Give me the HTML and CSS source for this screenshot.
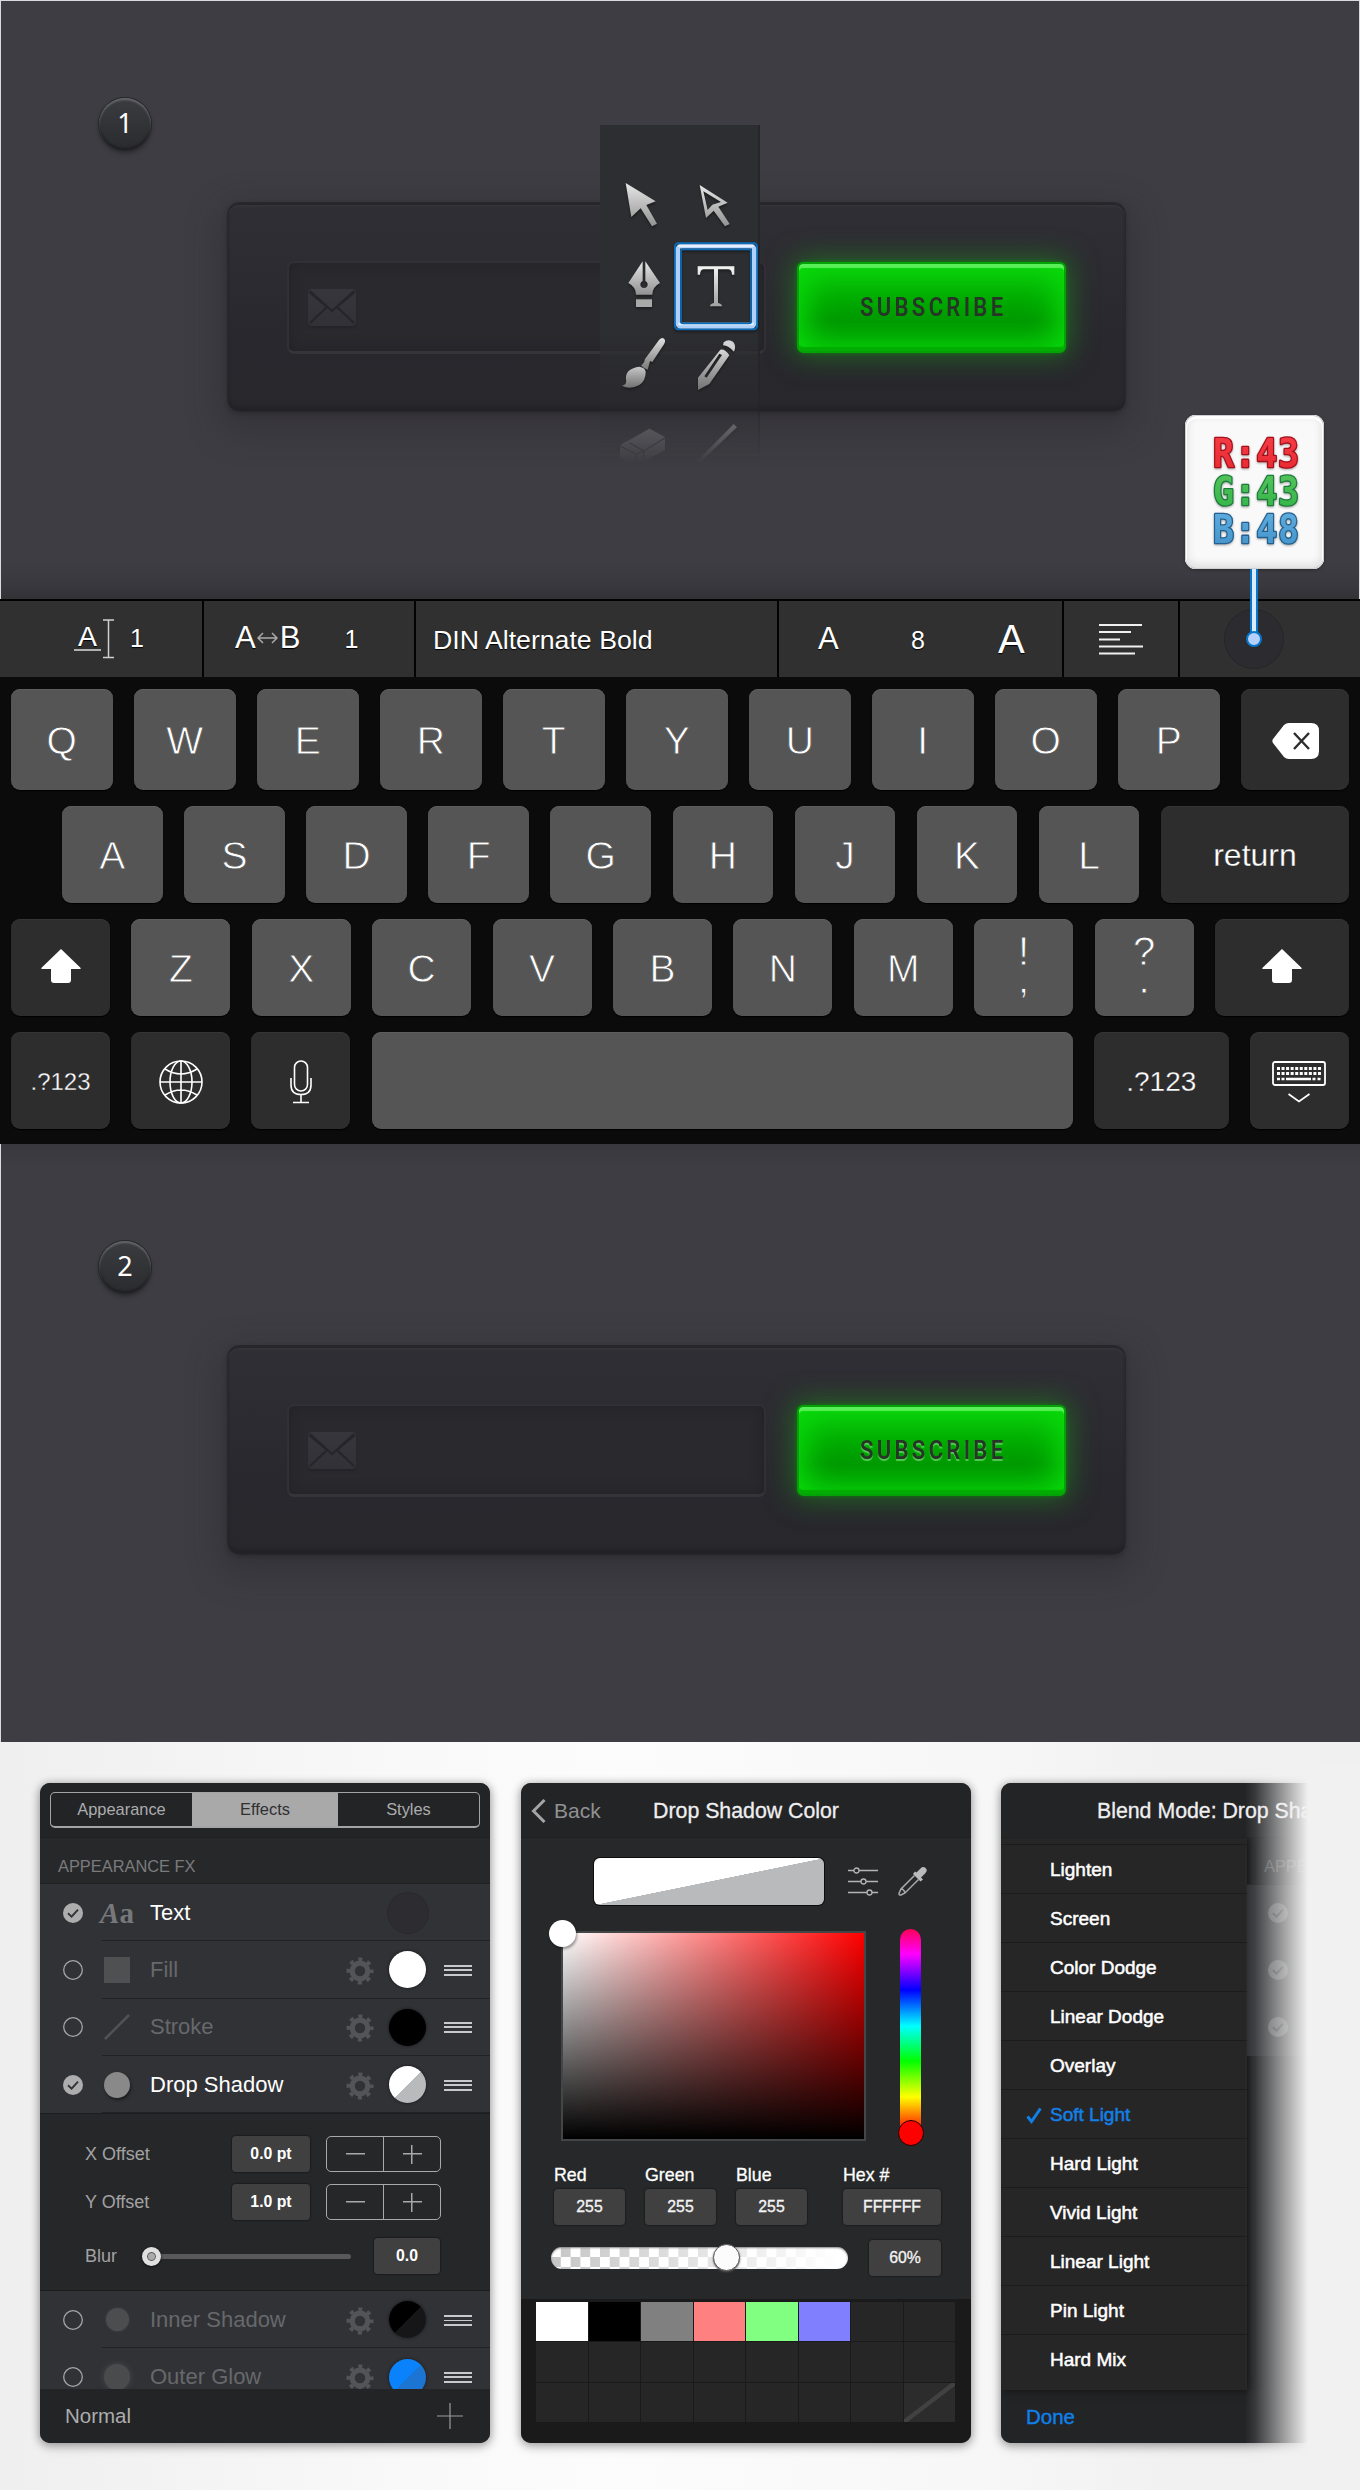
FILE: index.html
```html
<!DOCTYPE html>
<html lang="en">
<head>
<meta charset="utf-8">
<title>Subscribe form tutorial</title>
<link rel="stylesheet" href="styles.css">
</head>
<body>
<svg class="defs" width="0" height="0">
  <defs>
    <linearGradient id="metal" x1="0" y1="0" x2="0" y2="1"><stop offset="0" stop-color="#e6e6e6"/><stop offset="1" stop-color="#929292"/></linearGradient>
    <linearGradient id="lightMetal" x1="0" y1="0" x2="0" y2="1"><stop offset="0" stop-color="#f4f4f4"/><stop offset="1" stop-color="#a0a0a0"/></linearGradient>
    <linearGradient id="dimMetal" x1="0" y1="0" x2="0" y2="1"><stop offset="0" stop-color="#e0e0e0"/><stop offset="1" stop-color="#888"/></linearGradient>
    <linearGradient id="red" x1="0" y1="0" x2="0" y2="1"><stop offset="0" stop-color="#f5404a"/><stop offset="1" stop-color="#e8252e"/></linearGradient>
    <linearGradient id="green" x1="0" y1="0" x2="0" y2="1"><stop offset="0" stop-color="#57c45c"/><stop offset="1" stop-color="#30b445"/></linearGradient>
    <linearGradient id="blue" x1="0" y1="0" x2="0" y2="1"><stop offset="0" stop-color="#63b0e0"/><stop offset="1" stop-color="#3f90c8"/></linearGradient>
    <linearGradient id="envelopeFill" x1="0" y1="0" x2="0" y2="1"><stop offset="0" stop-color="#37363c"/><stop offset="1" stop-color="#323137"/></linearGradient>
  </defs>
  <symbol id="envelope" viewBox="0 0 48 38">
    <rect x="0" y="1" width="48" height="37" rx="4" fill="url(#envelopeFill)"/>
    <path d="M1 4 19 19 2 35M47 4 29 19 46 35M2 3 24 23 46 3" fill="none" stroke="#26252b" stroke-width="2.2"/>
  </symbol>
  <symbol id="gear" viewBox="-14 -14 28 28">
    <circle r="7.8" fill="none" stroke="#535456" stroke-width="5.2"/>
    <circle r="11.6" fill="none" stroke="#535456" stroke-width="3.8" stroke-dasharray="4.1 5.01" stroke-dashoffset="2.05"/>
  </symbol>
  <symbol id="tick" viewBox="0 0 20 20">
    <circle cx="10" cy="10" r="10" fill="#adadae"/>
    <path d="M5 10.3 8.6 13.6 15 6.6" fill="none" stroke="#313236" stroke-width="1.9"/>
  </symbol>
  <symbol id="ring" viewBox="0 0 20 20"><circle cx="10" cy="10" r="9.3" fill="none" stroke="#a5a5a7" stroke-width="1.3"/></symbol>
  <symbol id="shift" viewBox="0 0 40 34"><path d="M20 0 39.2 18.5Q40.500 20 38.500 20H30V31Q30 34 27 34H13Q10 34 10 31V20H1.500Q-.5 20 .8 18.500Z" fill="#fff"/></symbol>
</svg>

<section class="stage stage-first">
  <div class="badge">1</div>
  <div class="form">
    <div class="input"><svg class="envelope"><use href="#envelope"/></svg></div>
    <div class="subscribe"><span>SUBSCRIBE</span></div>
  </div>

  <div class="palette">
    <svg class="tool" viewBox="30 180 240 215"><path d="M107 219 197 274 169 285 201 341 186 349 152 295 124 321Z" fill="url(#metal)"/></svg>
    <svg class="tool" viewBox="270 180 240 215"><path fill-rule="evenodd" d="M329 225 413 278 385 290 419 342 405 349 371 302 348 324ZM340 244 353 300 367 284 393 276Z" fill="url(#metal)"/></svg>
    <svg class="tool" viewBox="30 395 240 265">
      <path d="M158 453 115 518Q138 530 138 553H187Q187 530 210 518L166 453V512A11 11 0 1 1 158 512Z" fill="url(#metal)"/>
      <rect x="138" y="567" width="48" height="23" fill="#a9a9a9"/>
    </svg>
    <svg class="tool" viewBox="270 395 240 265">
      <rect x="255" y="399" width="246" height="258" rx="10" fill="none" stroke="#0a6cba" stroke-width="6"/>
      <rect x="264" y="408" width="228" height="240" rx="7" fill="none" stroke="#aed0fb" stroke-width="13"/>
      <path d="M268 407H488M268 641H488" stroke="#e4f0ff" stroke-width="8" stroke-linecap="round"/>
      <rect x="273" y="417" width="210" height="222" rx="5" fill="none" stroke="#0a6cba" stroke-width="5"/>
      <path d="M323 468H433V493H426Q425 477 414 477H384V578Q396 580 396 588H360Q360 580 372 578V477H342Q331 477 330 493H323Z" fill="url(#lightMetal)"/>
    </svg>
    <svg class="tool" viewBox="30 660 240 230">
      <path d="M207 690Q216 680 223 687 228 693 222 703L187 756 180 753 173 779Q162 777 153 766Q163 760 165 747Z" fill="url(#dimMetal)"/>
      <path d="M148 770Q166 773 167 785 168 812 148 825 120 840 96 827 111 825 108 809 104 776 148 770Z" fill="url(#dimMetal)"/>
    </svg>
    <svg class="tool" viewBox="270 660 240 230">
      <path d="M401 697Q415 685 429 695 440 706 432 725Q412 705 399 706Z" fill="#d6d6d6"/>
      <path fill-rule="evenodd" d="M391 719Q405 716 418 736L358 822 324 840V803ZM388 731 343 799 350 803 396 735Z" fill="url(#dimMetal)"/>
    </svg>
    <svg class="tool" viewBox="30 890 240 220">
      <path d="M90 1006 105 994 176 954 225 980V1020L138 1065 90 1042Z" fill="#a8a8aa"/>
      <path d="M90 1007 138 1032 161 1022 225 983M138 1032V1064M119 998 161 1022V1050M105 994 176 954" fill="none" stroke="#3c3b41" stroke-width="4"/>
    </svg>
    <svg class="tool" viewBox="270 890 240 220"><path d="M319 1057 431 944 438 951 324 1060Z" fill="#d0d0d2" stroke="#d0d0d2" stroke-width="4"/></svg>
  </div>

  <div class="tip">
    <svg class="tip-text" viewBox="0 0 92 116">
      <g font-family="DejaVu Sans Mono" font-weight="700" font-size="35" stroke-width="2.4" paint-order="stroke" stroke-linejoin="round">
        <text transform="translate(3 31) scale(1 1.12)" textLength="86" fill="url(#red)" stroke="#a50f18">R:43</text>
        <text transform="translate(3 69) scale(1 1.12)" textLength="86" fill="url(#green)" stroke="#1d7b3e">G:43</text>
        <text transform="translate(3 107) scale(1 1.12)" textLength="86" fill="url(#blue)" stroke="#23608f">B:48</text>
      </g>
    </svg>
    <div class="pin"></div>
  </div>
</section>

<section class="typing">
  <div class="textbar">
    <div class="cell leading">
      <svg class="ibeam" width="42" height="42" viewBox="0 0 42 42"><path d="M1 32H28" stroke="#ddd" stroke-width="1.500"/><path d="M30 2H41M30 39.500H41M35.500 2V39" stroke="#d0d0d0" stroke-width="1.500" fill="none"/><text x="5" y="28" font-size="28" textLength="19" lengthAdjust="spacingAndGlyphs">A</text></svg>
      <span class="val">1</span>
    </div>
    <div class="cell tracking">
      <span class="ab">A</span><svg width="21" height="14" viewBox="0 0 21 14"><path d="M1 7H20M6 2 1 7 6 12M15 2 20 7 15 12" fill="none" stroke="#aaa" stroke-width="1.500"/></svg><span class="ab">B</span>
      <span class="val">1</span>
    </div>
    <div class="cell fontname">DIN Alternate Bold</div>
    <div class="cell size"><span class="small">A</span><span class="val">8</span><span class="big">A</span></div>
    <div class="cell align"><svg width="44" height="32" viewBox="0 0 44 32"><path d="M0 2H43M0 9H32M0 16.500H21M0 23.500H44M0 30.500H36" stroke="#f0f0f0" stroke-width="2"/></svg></div>
    <div class="cell color"><div class="chip"></div></div>
  </div>
  <div class="keys">
    <div class="row row-1">
      <div class="key">Q</div><div class="key">W</div><div class="key">E</div><div class="key">R</div><div class="key">T</div><div class="key">Y</div><div class="key">U</div><div class="key">I</div><div class="key">O</div><div class="key">P</div>
      <div class="key dark w-back"><svg width="47" height="36" viewBox="0 0 47 36"><path d="M17 0H39Q47 0 47 8V28Q47 36 39 36H17Q14 36 12 34L1 20Q-.3 18 1 16L12 2Q14 0 17 0Z" fill="#fff"/><path d="M22 10 37 26M37 10 22 26" stroke="#2d2d2e" stroke-width="2.400"/></svg></div>
    </div>
    <div class="row row-2">
      <div class="key">A</div><div class="key">S</div><div class="key">D</div><div class="key">F</div><div class="key">G</div><div class="key">H</div><div class="key">J</div><div class="key">K</div><div class="key">L</div>
      <div class="key dark w-return">return</div>
    </div>
    <div class="row row-3">
      <div class="key dark"><svg class="shift"><use href="#shift"/></svg></div>
      <div class="key">Z</div><div class="key">X</div><div class="key">C</div><div class="key">V</div><div class="key">B</div><div class="key">N</div><div class="key">M</div>
      <div class="key double"><span>!</span><span>,</span></div><div class="key double"><span>?</span><span>.</span></div>
      <div class="key dark w-shift"><svg class="shift"><use href="#shift"/></svg></div>
    </div>
    <div class="row row-4">
      <div class="key dark num">.?123</div>
      <div class="key dark"><svg width="44" height="44" viewBox="0 0 44 44"><g fill="none" stroke="#fff" stroke-width="1.600"><circle cx="22" cy="22" r="21"/><ellipse cx="22" cy="22" rx="11" ry="21"/><path d="M22 1V43M1 22H43M6 9Q22 19 38 9M6 35Q22 25 38 35"/></g></svg></div>
      <div class="key dark"><svg width="22" height="44" viewBox="0 0 22 44"><g fill="none" stroke="#fff" stroke-width="1.600"><rect x="4.500" y="1" width="13" height="30" rx="6.500"/><path d="M1 18V25Q1 34.500 11 34.500T21 25V18M11 34.500V42.500M3 42.500H19"/></g></svg></div>
      <div class="key space"></div>
      <div class="key dark num-r">.?123</div>
      <div class="key dark"><svg width="54" height="42" viewBox="0 0 54 42"><rect x="1" y="1" width="52" height="23" rx="2" fill="none" stroke="#fff" stroke-width="1.800"/><path d="M5 7.500H49M5 12.500H49" stroke="#fff" stroke-width="3" stroke-dasharray="3 1.550"/><path d="M5 18H8M9.500 18H12.500M14 18H39M40.500 18H43.500M45.500 18H48.500" stroke="#fff" stroke-width="2.600"/><path d="M16.500 33 27 40.500 37.500 33" fill="none" stroke="#fff" stroke-width="1.700"/></svg></div>
    </div>
  </div>
</section>

<section class="stage stage-second">
  <div class="badge">2</div>
  <div class="form">
    <div class="input"><svg class="envelope"><use href="#envelope"/></svg></div>
    <div class="subscribe embossed"><span>SUBSCRIBE</span></div>
  </div>
</section>

<section class="studio">
  <div class="panel effects">
    <div class="head"><div class="tabs"><span>Appearance</span><span class="on">Effects</span><span>Styles</span></div></div>
    <div class="caption">APPEARANCE FX</div>
    <div class="fx on"><svg class="mark"><use href="#tick"/></svg><div class="thumb aa"><em>A</em>a</div><div class="name">Text</div><div class="dot ink"></div></div>
    <div class="fx"><svg class="mark"><use href="#ring"/></svg><div class="thumb"><i class="square"></i></div><div class="name">Fill</div><svg class="gear"><use href="#gear"/></svg><div class="dot white"></div><div class="grip"></div></div>
    <div class="fx"><svg class="mark"><use href="#ring"/></svg><div class="thumb"><svg width="26" height="26"><path d="M1 25 25 1" stroke="#515254" stroke-width="2.500"/></svg></div><div class="name">Stroke</div><svg class="gear"><use href="#gear"/></svg><div class="dot black"></div><div class="grip"></div></div>
    <div class="fx on"><svg class="mark"><use href="#tick"/></svg><div class="thumb"><i class="ball"></i></div><div class="name">Drop Shadow</div><svg class="gear"><use href="#gear"/></svg><div class="dot split"></div><div class="grip"></div></div>
    <div class="detail">
      <div class="line"><label>X Offset</label><b class="field">0.0 pt</b><div class="stepper"><i class="minus"></i><i class="plus"></i></div></div>
      <div class="line"><label>Y Offset</label><b class="field">1.0 pt</b><div class="stepper"><i class="minus"></i><i class="plus"></i></div></div>
      <div class="line blur"><label>Blur</label><div class="slider"><i></i></div><b class="field">0.0</b></div>
    </div>
    <div class="more">
      <div class="fx"><svg class="mark"><use href="#ring"/></svg><div class="thumb"><i class="ball soft"></i></div><div class="name">Inner Shadow</div><svg class="gear"><use href="#gear"/></svg><div class="dot split-dark"></div><div class="grip"></div></div>
      <div class="fx"><svg class="mark"><use href="#ring"/></svg><div class="thumb"><i class="ball glow"></i></div><div class="name">Outer Glow</div><svg class="gear"><use href="#gear"/></svg><div class="dot split-blue"></div><div class="grip"></div></div>
    </div>
    <div class="foot"><span>Normal</span><svg width="26" height="26"><path d="M13 0V26M0 13H26" stroke="#9c9c9e" stroke-width="1.200"/></svg></div>
  </div>

  <div class="panel picker">
    <div class="head"><div class="back"><svg width="15" height="24"><path d="M13.500 1 2.500 12 13.500 23" fill="none" stroke="#a4a4a6" stroke-width="3"/></svg>Back</div><div class="title">Drop Shadow Color</div></div>
    <div class="preview">
      <div class="bar"></div>
      <svg width="30" height="29" viewBox="0 0 30 29"><g fill="none" stroke="#b4b4b4" stroke-width="1.300"><path d="M0 3.500H6M11 3.500H30M0 14.500H13M18 14.500H30M0 25.500H19M24 25.500H30"/><circle cx="8.500" cy="3.500" r="2.500"/><circle cx="15.500" cy="14.500" r="2.500"/><circle cx="21.500" cy="25.500" r="2.500"/></g></svg>
      <svg width="29" height="29" viewBox="0 0 29 29"><path d="M17 4.500 15 7 22.500 14.500 25 12.500 23 10.500 27.500 6Q30 3 27.500 1 25 -1 22.500 1.500L18.500 5.500Z" fill="#bbb"/><path d="M16.500 8.500 3 22 1 26.500Q1 28.500 3 28L7 26 20.500 12.500M3 22Q6 22 7 26" fill="none" stroke="#aaa" stroke-width="1.500"/></svg>
    </div>
    <div class="mixer"><div class="field2d"><i class="knob"></i></div><div class="hue"><i class="knob-red"></i></div></div>
    <div class="values">
      <div class="v"><label>Red</label><span class="field">255</span></div>
      <div class="v"><label>Green</label><span class="field">255</span></div>
      <div class="v"><label>Blue</label><span class="field">255</span></div>
      <div class="v hex"><label>Hex #</label><span class="field">FFFFFF</span></div>
    </div>
    <div class="alpha"><div class="alpha-bar"><i></i></div><span class="field">60%</span></div>
    <div class="swatches">
      <i class="s-white"></i><i class="s-black"></i><i class="s-gray"></i><i class="s-red"></i><i class="s-green"></i><i class="s-blue"></i><i></i><i></i>
      <i></i><i></i><i></i><i></i><i></i><i></i><i></i><i></i>
      <i></i><i></i><i></i><i></i><i></i><i></i><i></i><i class="none"></i>
    </div>
  </div>

  <div class="panel blend">
    <div class="head"><div class="title">Blend Mode: Drop Shadow</div></div>
    <div class="split-view">
      <div class="modes">
        <div>Lighten</div><div>Screen</div><div>Color Dodge</div><div>Linear Dodge</div><div>Overlay</div>
        <div class="picked"><svg width="16" height="17" viewBox="0 0 16 17"><path d="M1.500 9.500 5.500 14.500 14.500 1.500" fill="none" stroke="#0f80ea" stroke-width="3"/></svg>Soft Light</div>
        <div>Hard Light</div><div>Vivid Light</div><div>Linear Light</div><div>Pin Light</div><div>Hard Mix</div>
      </div>
      <div class="behind">
        <div class="caption">APPEARANCE FX</div>
        <div class="ghost"><svg class="mark"><use href="#tick"/></svg></div>
        <div class="ghost"><svg class="mark"><use href="#tick"/></svg></div>
        <div class="ghost"><svg class="mark"><use href="#tick"/></svg></div>
      </div>
    </div>
    <div class="foot"><span>Done</span></div>
  </div>
  <div class="fade"></div>
</section>
</body>
</html>
```

FILE: styles.css
```css
* { box-sizing: border-box; }
body { margin: 0; width: 1360px; background: #f2f2f2; font-family: "Liberation Sans", Arial, sans-serif; color: #fff; overflow-x: hidden; }
i { font-style: normal; display: block; }
.defs { position: absolute; }
svg { display: block; flex: none; }

/* Canvas with the subscribe form */
.stage { position: relative; padding-top: 97px; background: #3e3d43; border: solid #d9dcdd; border-width: 0 1px; }
.stage-first { z-index: 1; height: 599px; border-top-width: 1px; background: linear-gradient(#3e3d43 560px, #39383e 585px, #323136); }
.stage-second { height: 598px; background: linear-gradient(#39383e, #3e3d43 24px); border-right-width: 0; }
.badge { width: 52px; height: 52px; margin-left: 98px; border-radius: 50%; background: linear-gradient(#3b3c40, #2a2b2e); box-shadow: inset 0 2px 2px #66676c, inset 0 -2px 2px #1e1f22, 0 0 0 1px #26262a, 0 3px 4px #27272b; text-align: center; font: 27px/50px "Noto Sans", sans-serif; }
.form { display: flex; gap: 31px; width: 899px; height: 210px; margin: 52px 0 0 226px; padding: 58px 59px 0; border-radius: 12px; border: 1px solid #28272d; background: linear-gradient(#302f35, #29282e 65%, #28272c); box-shadow: inset 0 2px 0 #27262b, inset 0 4px 1px #34333a, inset 0 -4px 3px #232227, 0 12px 34px 6px rgba(40,39,45,.42), 0 2px 4px rgba(35,34,38,.5); }
.input { width: 480px; height: 93px; padding: 25px 0 0 19px; border: 2px solid #313036; border-bottom: 3px solid #353439; border-radius: 7px; background: #2a292e; box-shadow: inset 0 0 14px #232227; }
.envelope { width: 48px; height: 38px; filter: drop-shadow(0 2px 1px #242328); }
.subscribe { width: 270px; height: 91px; margin-top: 1px; border: 2px solid #05a207; border-radius: 6px; background: linear-gradient(#0bc60b, #00a800 45%, #009600 66%, #00a000); box-shadow: inset 0 4px 1px #58ef58, inset 0 -4px 1px #02ac02, inset 0 0 30px 7px #08dc0a, 0 0 28px 3px rgba(24,168,24,.5), 0 0 4px rgba(0,130,0,.7); text-align: center; color: #273427; font: 600 25px/87px Roboto, sans-serif; }
.subscribe span { display: inline-block; letter-spacing: 3.800px; margin-right: -3.800px; transform: scaleX(.88); }
.embossed { text-shadow: 0 2px 1px rgba(120,220,120,.7); }

/* Tool palette floats above the form */
.palette { position: absolute; left: 599px; top: 124px; width: 160px; height: 345px; padding-top: 45px; display: grid; grid-template-columns: 80px 80px; grid-template-rows: 71.667px 88.333px 76.667px 73.333px; align-content: start; background: linear-gradient(#2d2e31 195px, rgba(45,46,49,.45) 280px, rgba(45,46,49,.2)); box-shadow: 0 0 4px #2b2a2e, inset -2px 0 #252629; -webkit-mask-image: linear-gradient(#000 215px, rgba(0,0,0,.75) 270px, rgba(0,0,0,.3) 300px, transparent 338px); mask-image: linear-gradient(#000 215px, rgba(0,0,0,.75) 270px, rgba(0,0,0,.3) 300px, transparent 338px); }
.tool { width: 80px; height: 100%; overflow: visible; filter: drop-shadow(0 2px 1px rgba(0,0,0,.35)); }

/* Colour value callout */
.tip { position: absolute; left: 1184px; top: 414px; width: 139px; height: 154px; border-radius: 11px; background: #f9f9f9; box-shadow: inset 0 0 0 1px #cfcfd1, inset 0 2px 0 2px #fff, inset 0 -2px 8px 2px #dcdcde, 0 1px 3px #29292c; }
.tip-text { width: 92px; height: 116px; margin: 21px 0 0 25px; overflow: visible; filter: drop-shadow(0 1px 1px rgba(0,0,0,.35)); }
.pin { position: absolute; left: 65px; top: 154px; width: 8px; height: 70px; border: solid #0876ca; border-width: 0 2px; background: #dceafd; }
.pin::after { content: ""; position: absolute; left: -6px; top: 62px; width: 12px; height: 12px; border: 2px solid #0876ca; border-radius: 50%; background: #b5d0fa; }

/* Text bar and keyboard */
.typing { height: 545px; background: #0b0b0b; }
.textbar { display: flex; height: 78px; border-top: 2px solid #020202; background: #303031; }
.cell { display: flex; align-items: center; border-right: 2px solid #020202; font-size: 26px; text-shadow: 0 1px 1px #000; }
.val { font-size: 25px; }
.leading { width: 204px; padding: 0 0 1px 73px; gap: 15px; }
.leading text { fill: #fff; }
.tracking { width: 212px; padding: 0 0 2px 31px; font-size: 31px; }
.tracking svg { margin: 0 2px 0 1px; }
.tracking .val { margin: 3px 0 0 44px; }
.fontname { width: 363px; padding: 2px 0 0 17px; font-size: 26.700px; }
.size { width: 285px; padding-left: 39px; }
.small { font-size: 31px; width: 93px; }
.size .val { width: 87px; padding-top: 3px; }
.big { font-size: 40px; }
.align { width: 116px; padding-left: 35px; }
.color { flex: 1; border: 0; padding-left: 44px; }
.chip { width: 60px; height: 60px; border-radius: 50%; background: #2b2b30; border: 1px solid #262628; }
.keys { display: flex; flex-direction: column; padding: 12px 11px 0; gap: 16px; }
.row { display: flex; height: 97px; justify-content: space-between; }
.row-1 { height: 101px; }
.row-2 { padding-left: 51px; }
.key { display: flex; align-items: center; justify-content: center; width: 99px; padding-top: 2px; border-radius: 9px; background: #555556; box-shadow: inset 0 1px #5d5d5e, 0 1px 1px #000; font-size: 39px; -webkit-text-stroke: .8px #555556; }
.row-1 .key { width: 101.500px; }
.row-2 .key { width: 100.600px; }
.key.dark { background: #2d2d2e; box-shadow: inset 0 1px #343435, 0 1px 1px #000; -webkit-text-stroke: .3px #2d2d2e; }
.row .w-back { width: 108px; }
.row .w-return { width: 188px; font-size: 32px; }
.row .w-shift { width: 134px; }
.row .space { width: 701px; }
.row .num { font-size: 24px; }
.row .num-r { width: 135px; font-size: 28px; }
.row .double { flex-direction: column; line-height: 28px; padding: 0 0 6px; font-size: 40px; }
.shift { width: 40px; height: 34px; margin-top: -6px; }

/* Inspector panels */
.studio { position: relative; display: flex; height: 748px; padding: 41px 0 0 40px; background: linear-gradient(90deg, #efeff0, #f9f9f9 30%, #fcfcfc 45%, #f7f7f7 72%, #f1f1f1 86%, #f0f0f0); overflow: hidden; }
.panel { flex: none; width: 450px; height: 660px; margin-right: 31px; border-radius: 10px; background: #27282a; overflow: hidden; box-shadow: 0 1px 9px 1px rgba(0,0,0,.3), 0 5px 12px rgba(0,0,0,.13); }
.picker { margin-right: 30px; }
.head { height: 55px; padding: 9px 10px 0; background: #232426; border-bottom: 1px solid #1f2022; }
.tabs { display: flex; height: 36px; border: 1px solid #a4a4a6; border-bottom-width: 2px; border-radius: 5px; font-size: 16.400px; line-height: 32px; color: #acacae; text-align: center; }
.tabs span { width: 141px; }
.tabs .on { width: 146px; background: #a9a9a9; color: #303033; }
.caption { height: 46px; padding-left: 18px; font-size: 16.400px; line-height: 56px; color: #7b7b7d; border-bottom: 1px solid #1f2022; }
.fx { position: relative; display: flex; align-items: center; height: 57.300px; padding-left: 23px; background: #313236; }
.fx::after { content: ""; position: absolute; left: 62px; right: 0; bottom: 0; height: 1px; background: #212225; }
.mark { width: 20px; height: 20px; }
.thumb { width: 34px; margin: 0 16px 0 17px; display: flex; justify-content: center; }
.aa { font: 700 29px/30px "Liberation Serif", serif; color: #77787a; }
.name { width: 197px; font-size: 22px; color: #67686b; }
.on .name { color: #fff; }
.on .name + .dot { width: 40px; height: 40px; margin-left: 41px; }
.gear { width: 28px; height: 28px; margin: 2px 15px 0 -1px; }
.square { width: 26px; height: 26px; background: #4f5052; }
.ball { width: 26px; height: 26px; border-radius: 50%; background: #898989; box-shadow: 1px 2px 3px #1c1c1e; }
.soft { width: 23px; height: 23px; background: #4c4d4f; box-shadow: 0 0 3px #444547; }
.glow { background: #4a4b4d; box-shadow: 0 0 6px #4a4b4d; }
.dot { width: 37px; height: 37px; border-radius: 50%; box-shadow: 0 0 3px #151517; }
.ink { background: #2d2d31; box-shadow: 0 0 0 1px #2a2a2e; }
.white { background: #fff; }
.black { background: #000; }
.split { background: linear-gradient(135deg, #fff 50%, #b9babc 51%); }
.split-dark { background: linear-gradient(135deg, #000 50%, #161618 51%); }
.split-blue { background: linear-gradient(135deg, #0a82fb 50%, #1c75d2 51%); }
.grip { width: 28px; height: 11px; margin: 1px 0 0 18px; background: linear-gradient(#c9c9cc 2px, transparent 2px 4.500px, #c9c9cc 4.500px 6.500px, transparent 6.500px 9px, #c9c9cc 9px); }
.detail { height: 178px; padding: 22px 0 0 45px; background: #262729; box-shadow: inset 0 1px #1c1d1f, inset 0 -1px #1c1d1f; }
.line { display: flex; align-items: center; height: 38px; margin-bottom: 10px; }
.line label { width: 147px; font-size: 18px; color: #a2a2a4; }
.field { display: flex; align-items: center; justify-content: center; height: 36px; border-radius: 4px; background: #404041; box-shadow: 0 0 1px 1px #1d1d1f; font-size: 15.800px; }
.line .field { width: 78px; }
.stepper { display: flex; width: 115px; height: 36px; margin-left: 16px; border: 1px solid #a9a9ab; border-radius: 5px; }
.stepper i { flex: 1; background: linear-gradient(#a9a9ab, #a9a9ab) center/19px 1.500px no-repeat; }
.stepper .plus { border-left: 1px solid #a9a9ab; background: linear-gradient(#a9a9ab, #a9a9ab) center/19px 1.500px no-repeat, linear-gradient(#a9a9ab, #a9a9ab) center/1.500px 19px no-repeat; }
.line.blur { margin-top: 16px; }
.blur label { width: 67px; }
.slider { width: 199px; height: 5px; border-radius: 3px; background: #59595b; margin-right: 23px; }
.slider i { width: 19px; height: 19px; margin: -7px 0 0 -10px; border-radius: 50%; border: 5px solid #e0e0e0; background: #aaa; box-shadow: inset 0 0 0 1px #555, 0 1px 3px #111; }
.slider { display: flow-root; overflow: visible; }
.blur .field { width: 66px; }
.more { height: 98px; overflow: hidden; }
.foot { display: flex; justify-content: space-between; align-items: center; height: 54px; padding: 0 27px 0 25px; background: #232426; font-size: 20.500px; color: #acacae; }

/* Colour picker */
.picker .head, .blend .head { position: relative; font-size: 21.300px; line-height: 38px; }
.title { text-align: center; color: #efeff0; -webkit-text-stroke: .3px #efeff0; }
.back { position: absolute; left: 10px; display: flex; align-items: center; gap: 8px; font-size: 21px; color: #919193; }
.preview { display: flex; align-items: center; height: 86px; padding: 0 0 0 73px; }
.bar { width: 230px; height: 47px; margin-right: 24px; border-radius: 6px; box-shadow: 0 0 0 1px #0d0d0e; background: linear-gradient(to bottom right, #fff 50%, #b9babc 50.300%); }
.preview svg + svg { margin-left: 20px; }
.mixer { display: flex; height: 225px; padding: 7px 0 0 40px; }
.field2d { width: 305px; height: 210px; border: 2px solid #444547; background: linear-gradient(transparent, #000), linear-gradient(90deg, #fff, red); }
.knob { width: 27px; height: 27px; margin: -13px 0 0 -14px; border-radius: 50%; background: #fff; box-shadow: 1px 2px 3px rgba(0,0,0,.4); }
.hue { width: 21px; height: 214px; margin: -2px 0 0 34px; padding-top: 191px; border-radius: 11px; background: linear-gradient(#ff0058, #ff0080 6px, #f0f 25px, #00f 61px, #0ff 97px, #0f0 132px, #ff0 168px, red 203px); }
.knob-red { width: 26px; height: 26px; margin-left: -2.500px; border: 1px solid #250000; border-radius: 50%; background: red; }
.values { display: flex; gap: 20px; padding-left: 33px; height: 90px; }
.v { width: 71px; }
.hex { width: 98px; margin-left: 16px; }
.v label { display: block; height: 40px; padding-top: 16px; font-size: 17.800px; line-height: 20px; -webkit-text-stroke: .3px #fff; }
.picker .field { -webkit-text-stroke: .3px #fff; color: #eee; }
.alpha { display: flex; align-items: center; height: 38px; margin-bottom: 22px; padding: 0 0 0 30px; }
.alpha-bar { width: 297px; height: 22px; margin-right: 21px; border-radius: 11px; background: linear-gradient(90deg, rgba(255,255,255,0), #fff 97%), conic-gradient(#c6c6c6 25%, #fff 0 50%, #c6c6c6 0 75%, #fff 0) 0 0/19.600px 20px; box-shadow: inset 0 1px 2px #888; }
.alpha-bar { display: flow-root; }
.alpha-bar i { width: 27px; height: 27px; margin: -3px 0 0 162px; border: 1px solid #58585a; border-radius: 50%; background: #fcfcfc; box-shadow: 0 1px 2px #555; }
.alpha .field { width: 72px; }
.swatches { display: grid; grid-template-columns: repeat(8, 1fr); grid-template-rows: repeat(3, 39.300px); gap: 1px; height: 145px; padding: 3px 16px 0 15px; background: #1a1a1a; }
.swatches i { background: #262627; }
.swatches .s-white { background: #fff; }
.swatches .s-black { background: #000; }
.swatches .s-gray { background: #808080; }
.swatches .s-red { background: #ff8080; }
.swatches .s-green { background: #80ff80; }
.swatches .s-blue { background: #8080ff; }
.swatches .none { background: linear-gradient(to bottom right, #2c2c2d 46%, #414142 47% 53%, #2c2c2d 54%); }

/* Blend mode list */
.blend .title { text-align: left; padding-left: 86px; white-space: nowrap; }
.split-view { display: flex; height: 552px; background: #222325; }
.modes { width: 246px; padding-top: 6px; background: #262627; box-shadow: 2px 0 8px #111; }
.modes div { display: flex; align-items: center; height: 49px; padding: 2px 0 0 49px; font-size: 19px; border-top: 1px solid #1c1c1d; -webkit-text-stroke: .5px; }
.modes .picked { padding-left: 25px; gap: 8px; color: #1380e6; }
.behind { width: 204px; }
.behind .caption { height: 47px; padding-left: 17px; color: #4c4c4e; }
.ghost { height: 57px; padding: 18px 0 0 21px; background: #2c2d30; }
.ghost .mark { opacity: .3; }
.blend .foot { height: 53px; color: #0f80ea; -webkit-text-stroke: .4px; }
.fade { position: absolute; left: 1245px; top: 20px; bottom: 0; width: 115px; background: linear-gradient(90deg, rgba(241,241,241,0), rgba(241,241,241,.1) 10px, #f1f1f1 63px); }
```
